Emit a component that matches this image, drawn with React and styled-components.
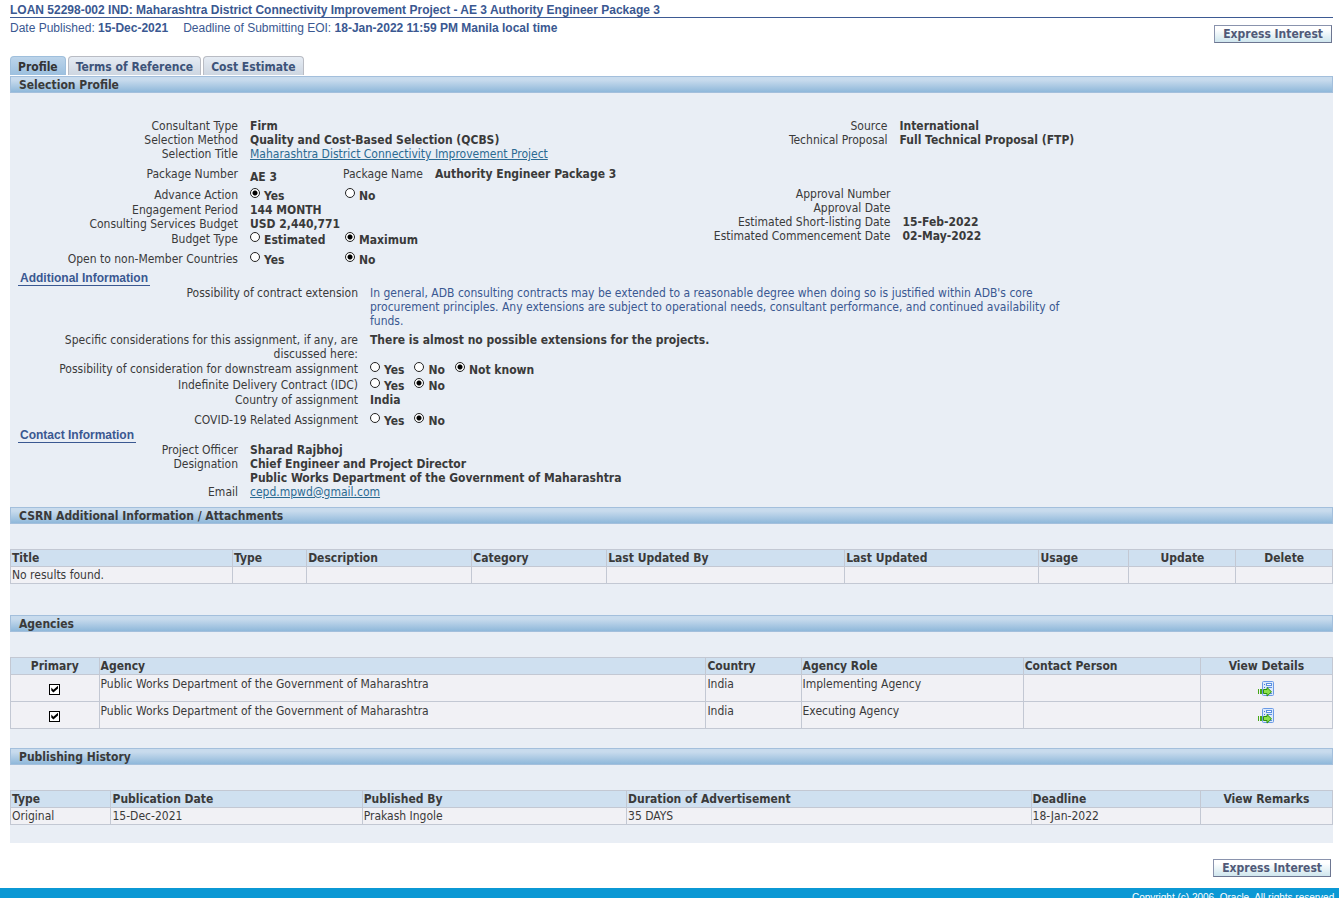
import React from "react";
import styled, { createGlobalStyle } from "styled-components";

const App = () => {
  return (
    <Page>
      <GlobalStyle />
      <Content>
        <PageTitle>
          LOAN 52298-002 IND: Maharashtra District Connectivity Improvement
          Project - AE 3 Authority Engineer Package 3
        </PageTitle>
        <TopRow>
          <Dates>
            <span>
              Date Published: <b>15-Dec-2021</b>
            </span>
            <span>
              Deadline of Submitting EOI:{" "}
              <b>18-Jan-2022 11:59 PM Manila local time</b>
            </span>
          </Dates>
          <ExpressButton type="button">Express Interest</ExpressButton>
        </TopRow>
        <Tabs>
          <Tab href="#profile" $active>
            Profile
          </Tab>
          <Tab href="#tor">Terms of Reference</Tab>
          <Tab href="#cost">Cost Estimate</Tab>
        </Tabs>
        <Panel>
          <Bar>Selection Profile</Bar>
          <Profile />
          <Bar>CSRN Additional Information / Attachments</Bar>
          <Attachments />
          <Bar>Agencies</Bar>
          <Agencies />
          <Bar>Publishing History</Bar>
          <History />
        </Panel>
        <BottomRow>
          <ExpressButton type="button">Express Interest</ExpressButton>
        </BottomRow>
      </Content>
      <Footer>Copyright (c) 2006, Oracle. All rights reserved.</Footer>
    </Page>
  );
};

const RadioGroup = ({ name, label, options, selected, wide }) => (
  <Options role="radiogroup" aria-label={label}>
    {options.map((option) => (
      <Option key={option} $wide={wide}>
        <Radio name={name} defaultChecked={option === selected} />
        {option}
      </Option>
    ))}
  </Options>
);

const RadioField = ({ label, space, labelWidth, ...rest }) => (
  <Field $space={space} $label={labelWidth}>
    <Label>{label}</Label>
    <RadioGroup label={label} {...rest} />
  </Field>
);

const Profile = () => (
  <ProfileBody>
    <Columns>
      <div>
        <Field>
          <Label>Consultant Type</Label>
          <Value>Firm</Value>
        </Field>
        <Field>
          <Label>Selection Method</Label>
          <Value>Quality and Cost-Based Selection (QCBS)</Value>
        </Field>
        <Field>
          <Label>Selection Title</Label>
          <TextLink href="#project">
            Maharashtra District Connectivity Improvement Project
          </TextLink>
        </Field>
        <Field $space={6}>
          <Label>Package Number</Label>
          <Package>
            <PackageNumber>AE 3</PackageNumber>
            <Label>Package Name</Label>
            <Value>Authority Engineer Package 3</Value>
          </Package>
        </Field>
      </div>
      <div>
        <Field $label={216}>
          <Label>Source</Label>
          <Value>International</Value>
        </Field>
        <Field $label={216}>
          <Label>Technical Proposal</Label>
          <Value>Full Technical Proposal (FTP)</Value>
        </Field>
      </div>
    </Columns>
    <Columns>
      <div>
        <RadioField
          label="Advance Action"
          name="advance"
          options={["Yes", "No"]}
          selected="Yes"
          space={1}
          wide
        />
        <Field>
          <Label>Engagement Period</Label>
          <Value>144 MONTH</Value>
        </Field>
        <Field>
          <Label>Consulting Services Budget</Label>
          <Value>USD 2,440,771</Value>
        </Field>
        <RadioField
          label="Budget Type"
          name="budget"
          options={["Estimated", "Maximum"]}
          selected="Maximum"
          space={1}
          wide
        />
        <RadioField
          label="Open to non-Member Countries"
          name="nonmember"
          options={["Yes", "No"]}
          selected="No"
          space={5}
          wide
        />
      </div>
      <div>
        <Field $label={219}>
          <Label>Approval Number</Label>
        </Field>
        <Field $label={219}>
          <Label>Approval Date</Label>
        </Field>
        <Field $label={219}>
          <Label>Estimated Short-listing Date</Label>
          <Value>15-Feb-2022</Value>
        </Field>
        <Field $label={219}>
          <Label>Estimated Commencement Date</Label>
          <Value>02-May-2022</Value>
        </Field>
      </div>
    </Columns>
    <SubHeading>Additional Information</SubHeading>
    <Field $label={348}>
      <Label>Possibility of contract extension</Label>
      <Note>
        In general, ADB consulting contracts may be extended to a reasonable
        degree when doing so is justified within ADB's core procurement
        principles. Any extensions are subject to operational needs, consultant
        performance, and continued availability of funds.
      </Note>
    </Field>
    <Field $label={348} $space={5}>
      <Label>
        Specific considerations for this assignment, if any, are
        <br />
        discussed here:
      </Label>
      <Value>There is almost no possible extensions for the projects.</Value>
    </Field>
    <RadioField
      label="Possibility of consideration for downstream assignment"
      name="downstream"
      options={["Yes", "No", "Not known"]}
      selected="Not known"
      labelWidth={348}
      space={1}
    />
    <RadioField
      label="Indefinite Delivery Contract (IDC)"
      name="idc"
      options={["Yes", "No"]}
      selected="No"
      labelWidth={348}
      space={1}
    />
    <Field $label={348}>
      <Label>Country of assignment</Label>
      <Value>India</Value>
    </Field>
    <RadioField
      label="COVID-19 Related Assignment"
      name="covid"
      options={["Yes", "No"]}
      selected="No"
      labelWidth={348}
      space={6}
    />
    <SubHeading $tight>Contact Information</SubHeading>
    <Field>
      <Label>Project Officer</Label>
      <Value>Sharad Rajbhoj</Value>
    </Field>
    <Field>
      <Label>Designation</Label>
      <Value>
        Chief Engineer and Project Director
        <br />
        Public Works Department of the Government of Maharashtra
      </Value>
    </Field>
    <Field>
      <Label>Email</Label>
      <TextLink href="mailto:cepd.mpwd@gmail.com">cepd.mpwd@gmail.com</TextLink>
    </Field>
  </ProfileBody>
);

const Attachments = () => (
  <TableArea $bottom={31}>
    <Table>
      <colgroup>
        <Col $width={16.8} />
        <Col $width={5.6} />
        <Col $width={12.5} />
        <Col $width={10.2} />
        <Col $width={18} />
        <Col $width={14.7} />
        <Col $width={6.8} />
        <Col $width={8.1} />
        <Col $width={7.3} />
      </colgroup>
      <thead>
        <tr>
          <Th>Title</Th>
          <Th>Type</Th>
          <Th>Description</Th>
          <Th>Category</Th>
          <Th>Last Updated By</Th>
          <Th>Last Updated</Th>
          <Th>Usage</Th>
          <Th $center>Update</Th>
          <Th $center>Delete</Th>
        </tr>
      </thead>
      <tbody>
        <tr>
          <Td>No results found.</Td>
          <Td />
          <Td />
          <Td />
          <Td />
          <Td />
          <Td />
          <Td />
          <Td />
        </tr>
      </tbody>
    </Table>
  </TableArea>
);

const agencies = [
  { role: "Implementing Agency", country: "India" },
  { role: "Executing Agency", country: "India" },
];

const Agencies = () => (
  <TableArea $bottom={19}>
    <Table>
      <colgroup>
        <Col $width={6.7} />
        <Col $width={45.9} />
        <Col $width={7.2} />
        <Col $width={16.8} />
        <Col $width={13.4} />
        <Col $width={10} />
      </colgroup>
      <thead>
        <tr>
          <Th $center>Primary</Th>
          <Th>Agency</Th>
          <Th>Country</Th>
          <Th>Agency Role</Th>
          <Th>Contact Person</Th>
          <Th $center>View Details</Th>
        </tr>
      </thead>
      <tbody>
        {agencies.map((agency) => (
          <TallRow key={agency.role}>
            <Td $center>
              <Checkbox defaultChecked aria-label={`Primary ${agency.role}`} />
            </Td>
            <Td>Public Works Department of the Government of Maharashtra</Td>
            <Td>{agency.country}</Td>
            <Td>{agency.role}</Td>
            <Td />
            <Td $center>
              <IconButton type="button" aria-label="View Details">
                <DetailsIcon />
              </IconButton>
            </Td>
          </TallRow>
        ))}
      </tbody>
    </Table>
  </TableArea>
);

const History = () => (
  <TableArea $bottom={18}>
    <Table>
      <colgroup>
        <Col $width={7.6} />
        <Col $width={19} />
        <Col $width={20} />
        <Col $width={30.6} />
        <Col $width={12.8} />
        <Col $width={10} />
      </colgroup>
      <thead>
        <tr>
          <Th>Type</Th>
          <Th>Publication Date</Th>
          <Th>Published By</Th>
          <Th>Duration of Advertisement</Th>
          <Th>Deadline</Th>
          <Th $center>View Remarks</Th>
        </tr>
      </thead>
      <tbody>
        <tr>
          <Td>Original</Td>
          <Td>15-Dec-2021</Td>
          <Td>Prakash Ingole</Td>
          <Td>35 DAYS</Td>
          <Td>18-Jan-2022</Td>
          <Td />
        </tr>
      </tbody>
    </Table>
  </TableArea>
);

const DetailsIcon = () => (
  <svg width="16" height="16" viewBox="0 0 16 16">
    <rect x="4.5" y="0.5" width="11" height="14" rx="1" fill="#dceafb" stroke="#6b9ae6" />
    <path d="M6 3h1v1H6zM6 6h1v1H6z" fill="#3f78d8" />
    <rect x="8.5" y="2.5" width="5" height="2" fill="#ffffff" stroke="#5b8fe0" />
    <path d="M9 6.5h5M12 12.5h2" stroke="#5b8fe0" />
    <path d="M0 8h1v5H0zM2 8h2v5H2z" fill="#45a716" />
    <path
      d="M5.5 8.5h3.5v-2l4.5 4.3-4.5 4.3v-2.6h-3.5z"
      fill="#8ae04a"
      stroke="#2f8f0c"
    />
  </svg>
);

const GlobalStyle = createGlobalStyle`
  body {
    margin: 0;
    background: #ffffff;
    color: #3a3a3a;
    font-family: "DejaVu Sans Condensed", Tahoma, "DejaVu Sans", sans-serif;
    font-size: 12px;
    line-height: 14px;
  }
`;

const Page = styled.div`
  overflow: hidden;
`;

const Content = styled.main`
  padding: 0 6px 0 10px;
`;

const PageTitle = styled.h1`
  margin: 0;
  padding-top: 3px;
  border-bottom: 1px solid #3d5a93;
  color: #3a5891;
  font-family: "Liberation Sans", Arial, sans-serif;
  font-size: 12px;
  line-height: 14px;
`;

const TopRow = styled.div`
  display: flex;
  justify-content: space-between;
  align-items: flex-start;
  height: 38px;
`;

const Dates = styled.div`
  display: flex;
  gap: 15px;
  padding-top: 3px;
  color: #3a5891;
  font-family: "Liberation Sans", Arial, sans-serif;
`;

const ExpressButton = styled.button`
  box-sizing: border-box;
  height: 18px;
  margin: 7px 1px 0 0;
  padding: 0 8px;
  border: 1px solid #8a93ad;
  border-right-color: #6d7691;
  border-bottom-color: #6d7691;
  background: linear-gradient(#ffffff 20%, #cfe6ee);
  color: #515a78;
  font: inherit;
  font-weight: bold;
  line-height: 16px;
`;

const Tabs = styled.nav`
  display: flex;
  gap: 2px;
`;

const Tab = styled.a`
  padding: 3px 7px 1px;
  border: 1px solid ${(p) => (p.$active ? "#9fbfdc" : "#b9bcc4")};
  border-bottom: 0;
  border-radius: 4px 4px 0 0;
  background: ${(p) =>
    p.$active
      ? "linear-gradient(#bcd4ea, #9cc0df)"
      : "linear-gradient(#e6ecf4, #cdd6e1)"};
  color: ${(p) => (p.$active ? "#333333" : "#3c5379")};
  font-weight: bold;
  text-decoration: none;
`;

const Panel = styled.section`
  margin-top: 1px;
  background: #e9eef5;
`;

const Bar = styled.h2`
  margin: 0;
  padding: 1px 8px 0;
  border: 1px solid #a3bfdc;
  background: linear-gradient(#c8dbed 20%, #8fb8da);
  font-size: 12px;
  line-height: 14px;
`;

const ProfileBody = styled.div`
  padding: 26px 0 8px;
`;

const Columns = styled.div`
  display: grid;
  grid-template-columns: 1fr 1fr;
`;

const Field = styled.div`
  display: grid;
  grid-template-columns: ${(p) => p.$label || 228}px 1fr;
  column-gap: 12px;
  margin-top: ${(p) => p.$space || 0}px;
`;

const Label = styled.div`
  text-align: right;
`;

const Value = styled.div`
  font-weight: bold;
`;

const Note = styled.div`
  max-width: 700px;
  color: #3a5891;
`;

const TextLink = styled.a`
  justify-self: start;
  color: #2b6a92;
`;

const Package = styled.div`
  display: flex;
  gap: 12px;
`;

const PackageNumber = styled(Value)`
  width: 81px;
  line-height: 20px;
`;

const Options = styled.div`
  display: flex;
  gap: 10px;
  height: 15px;
`;

const Option = styled.label`
  display: flex;
  gap: 4px;
  width: ${(p) => (p.$wide ? "85px" : "auto")};
  font-weight: bold;
  line-height: 16px;
`;

const Radio = styled.input.attrs({ type: "radio" })`
  appearance: none;
  flex: none;
  width: 10px;
  height: 10px;
  margin: 0;
  border: 1px solid #222222;
  border-radius: 50%;
  background: #ffffff;

  &:checked {
    background: radial-gradient(circle, #000000 2px, #ffffff 3px);
  }
`;

const SubHeading = styled.h3`
  width: fit-content;
  margin: ${(p) => (p.$tight ? "0" : "4px")} 0 0 8px;
  padding: 0 2px;
  border-bottom: 1px solid #3a5891;
  color: #3a5891;
  font-family: "Liberation Sans", Arial, sans-serif;
  font-size: 12px;
  line-height: 14px;
`;

const TableArea = styled.div`
  padding: 25px 0 ${(p) => p.$bottom}px;
`;

const Table = styled.table`
  width: 100%;
  border-collapse: collapse;
  table-layout: fixed;
`;

const Col = styled.col`
  width: ${(p) => p.$width}%;
`;

const Th = styled.th`
  height: 16px;
  padding: 0 1px;
  border: 1px solid #c3c8d3;
  background: #cfe0f0;
  text-align: ${(p) => (p.$center ? "center" : "left")};
`;

const Td = styled.td`
  height: 15px;
  padding: 1px 1px 0;
  border: 1px solid #c3c8d3;
  background: #f1f1f5;
  text-align: ${(p) => (p.$center ? "center" : "left")};
  vertical-align: ${(p) => (p.$center ? "middle" : "top")};
`;

const TallRow = styled.tr`
  ${Td} {
    height: 24px;
    padding: 2px 1px 0;
  }
`;

const Checkbox = styled.input.attrs({ type: "checkbox" })`
  appearance: none;
  display: block;
  width: 11px;
  height: 11px;
  margin: 0 auto;
  border: 1px solid #000000;
  background: #ffffff;

  &:checked::after {
    content: "";
    display: block;
    width: 7px;
    height: 7px;
    margin: 1px;
    background: #000000;
    clip-path: polygon(0 30%, 30% 60%, 100% 0, 100% 40%, 30% 100%, 0 70%);
  }
`;

const IconButton = styled.button`
  display: block;
  margin: 0 auto;
  padding: 0;
  border: 0;
  background: none;

  svg {
    display: block;
  }
`;

const BottomRow = styled.div`
  display: flex;
  justify-content: flex-end;
  padding: 9px 1px 11px;
`;

const Footer = styled.footer`
  padding: 3px 2px 0 0;
  background: #0b98d4;
  color: #ffffff;
  font-family: "Liberation Sans", Arial, sans-serif;
  font-size: 10px;
  text-align: right;
`;

export default App;
